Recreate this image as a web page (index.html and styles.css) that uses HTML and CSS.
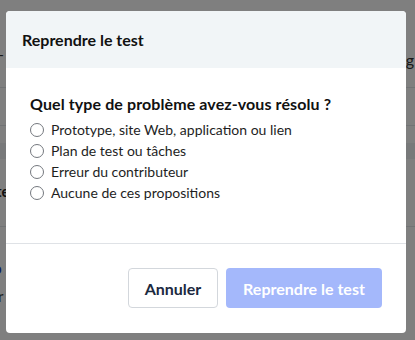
FILE: index.html
```html
<!DOCTYPE html>
<html lang="fr">
<head>
<meta charset="utf-8">
<link rel="stylesheet" href="styles.css">
</head>
<body>
<div class="page">
  <div class="pg-top"><span class="pg-dash">-</span><span class="pg-g">g</span></div>
  <div class="pg-line pg-l1"></div>
  <div class="pg-line pg-l2"></div>
  <div class="pg-band"></div>
  <div class="pg-te">te</div>
  <div class="pg-line pg-l3"></div>
  <div class="pg-link">o</div>
  <div class="pg-r">r</div>
</div>
<div class="overlay"></div>
<div class="modal">
  <div class="modal-header">
    <h2 class="modal-title">Reprendre le test</h2>
  </div>
  <div class="modal-body">
    <p class="question">Quel type de problème avez-vous résolu ?</p>
    <ul class="options">
      <li class="option"><span class="radio"></span>Prototype, site Web, application ou lien</li>
      <li class="option"><span class="radio"></span>Plan de test ou tâches</li>
      <li class="option"><span class="radio"></span>Erreur du contributeur</li>
      <li class="option"><span class="radio"></span>Aucune de ces propositions</li>
    </ul>
  </div>
  <div class="modal-footer">
    <button class="btn btn-secondary">Annuler</button>
    <button class="btn btn-primary">Reprendre le test</button>
  </div>
</div>
</body>
</html>
```

FILE: styles.css
```css
* { box-sizing: border-box; }
html, body { margin: 0; padding: 0; }
body {
  width: 415px;
  height: 340px;
  overflow: hidden;
  background: #ffffff;
  font-family: "Lato", "Liberation Sans", sans-serif;
  color: #111;
  position: relative;
}
.page { display: flex; flex-direction: column; }
.pg-top { height: 87px; display: flex; justify-content: space-between; align-items: flex-start; padding-top: 44px; font-size: 16px; color: #333; }
.pg-dash { margin-left: -2px; }
.pg-g { margin-right: 1px; margin-top: 6px; }
.pg-line { height: 1px; background: #e3e6ea; }
.pg-l2 { margin-top: 37px; }
.pg-band { margin-top: 17px; height: 16px; background: #f0f2f4; }
.pg-te { margin-top: 23px; font-size: 15px; font-weight: 700; color: #222; margin-left: -4px; }
.pg-l3 { margin-top: 26px; }
.pg-link { margin-top: 32px; font-size: 15px; font-weight: 700; color: #1f3bb8; margin-left: -7px; }
.pg-r { margin-top: 10px; font-size: 15px; color: #444; margin-left: -2px; }

.overlay { position: absolute; inset: 0; background: rgba(0,0,0,0.5); }

.modal {
  position: absolute;
  left: 6px;
  top: 11px;
  width: 400px;
  height: 322px;
  background: #fff;
  border-radius: 4px;
  overflow: hidden;
  display: flex;
  flex-direction: column;
}
.modal-header {
  height: 57px;
  background: #f1f5f7;
  display: flex;
  align-items: center;
  padding: 0 16px;
}
.modal-title { margin: 0; font-size: 16px; font-weight: 700; color: #111; }
.modal-body {
  padding: 26px 24px 0;
  height: 176px;
  border-bottom: 1px solid #dfe2e6;
}
.question { margin: 0 0 5px; font-size: 16px; font-weight: 700; line-height: 20px; color: #111; letter-spacing: 0.1px; }
.options { list-style: none; margin: 0; padding: 0; }
.option {
  display: flex;
  align-items: center;
  height: 21px;
  font-size: 14px;
  color: #1e1e1e;
}
.radio {
  width: 14px;
  height: 14px;
  border: 1px solid #74787e;
  border-radius: 50%;
  margin-right: 7px;
  flex: none;
}
.modal-footer {
  display: flex;
  justify-content: flex-end;
  gap: 8px;
  padding: 24px 24px 0;
}
.btn {
  height: 40px;
  border-radius: 4px;
  font-family: inherit;
  font-size: 16px;
  font-weight: 700;
  padding: 0;
}
.btn-secondary {
  width: 90px;
  background: #fff;
  border: 1px solid #d3d7dc;
  color: #1b2940;
}
.btn-primary {
  width: 156px;
  background: #a4b8fb;
  border: none;
  color: #fff;
}
```
